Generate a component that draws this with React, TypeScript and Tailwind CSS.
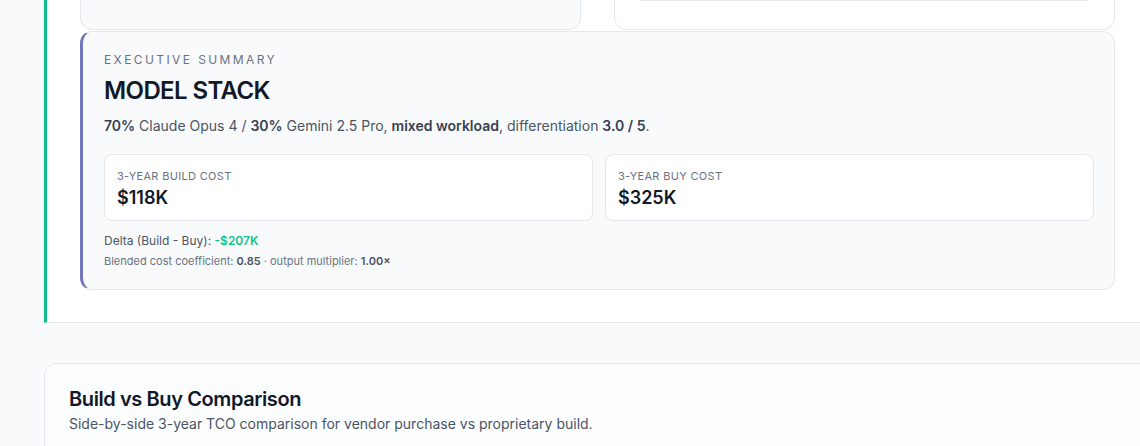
import React from "react";

const font = { fontFamily: "Inter, 'Noto Sans', sans-serif" };

function StatCard({ label, value }: { label: string; value: string }) {
  return (
    <div className="flex-1 h-[67px] rounded-lg border border-[#e5e7eb] bg-white px-[12px] pt-[13px]">
      <div className="text-[11px] leading-[16px] tracking-[0.03em] uppercase text-[#6b7280]">{label}</div>
      <div className="mt-[1px] text-[18px] leading-[26px] font-semibold text-[#111827]">{value}</div>
    </div>
  );
}

export default function App() {
  return (
    <div className="w-[1140px] h-[446px] overflow-hidden bg-[#f8fafc]" style={font}>
      <div className="pl-[44px]">
        {/* report section */}
        <section className="w-[1103px] bg-white border-l-[3px] border-[#10c08b] border-b border-b-[#e5e7eb] pl-[33px] pr-[32px] pb-[32px]">
          <div className="-mt-[40px] grid grid-cols-2 gap-[33px]">
            <div className="h-[70px] rounded-xl border border-[#e5e7eb] bg-[#f9fafc]" />
            <div className="h-[70px] rounded-xl border border-[#e5e7eb] bg-white px-[26px]">
              <div className="h-[40px] border-b border-[#e5e7eb]" />
            </div>
          </div>

          <div className="mt-[1px] rounded-xl border border-[#e5e7eb] border-l-[3px] border-l-[#7377bd] bg-gradient-to-br from-[#f8fafc] to-[#f9fafb] pl-[21px] pr-[20px] pt-[19px] pb-[20px]">
            <div className="text-[12px] leading-[18px] tracking-[0.2em] uppercase text-[#6b7280]">Executive Summary</div>
            <div className="mt-[6px] text-[24px] leading-[32px] font-semibold text-[#111827] tracking-[-0.025em]">MODEL STACK</div>
            <p className="mt-[9px] text-[14px] leading-[20px] text-[#4b5563]">
              <span className="font-semibold text-[#374151]">70%</span> Claude Opus 4 /{" "}
              <span className="font-semibold text-[#374151]">30%</span> Gemini 2.5 Pro,{" "}
              <span className="font-semibold text-[#374151]">mixed workload</span>, differentiation{" "}
              <span className="font-semibold text-[#374151]">3.0 / 5</span>.
            </p>
            <div className="mt-[18px] flex gap-[12px]">
              <StatCard label="3-Year Build Cost" value="$118K" />
              <StatCard label="3-Year Buy Cost" value="$325K" />
            </div>
            <div className="mt-[11px] text-[12px] leading-[18px] text-[#4b5563]">
              Delta (Build - Buy): <span className="font-semibold text-[#10c08b]">-$207K</span>
            </div>
            <div className="mt-[3px] text-[11px] leading-[16px] text-[#6b7280]">
              Blended cost coefficient: <span className="font-semibold text-[#4b5563]">0.85</span> · output multiplier:{" "}
              <span className="font-semibold text-[#4b5563]">1.00×</span>
            </div>
          </div>
        </section>

        {/* comparison card */}
        <section className="mt-[40px] w-[1120px] h-[120px] rounded-xl border border-[#e5e7eb] bg-[#fcfdfe] pl-[24px] pt-[21px]">
          <h2 className="text-[20px] leading-[28px] font-semibold text-[#111827] tracking-[-0.02em]">Build vs Buy Comparison</h2>
          <p className="mt-[1px] text-[14px] leading-[20px] text-[#4b5563]">
            Side-by-side 3-year TCO comparison for vendor purchase vs proprietary build.
          </p>
        </section>
      </div>
    </div>
  );
}
